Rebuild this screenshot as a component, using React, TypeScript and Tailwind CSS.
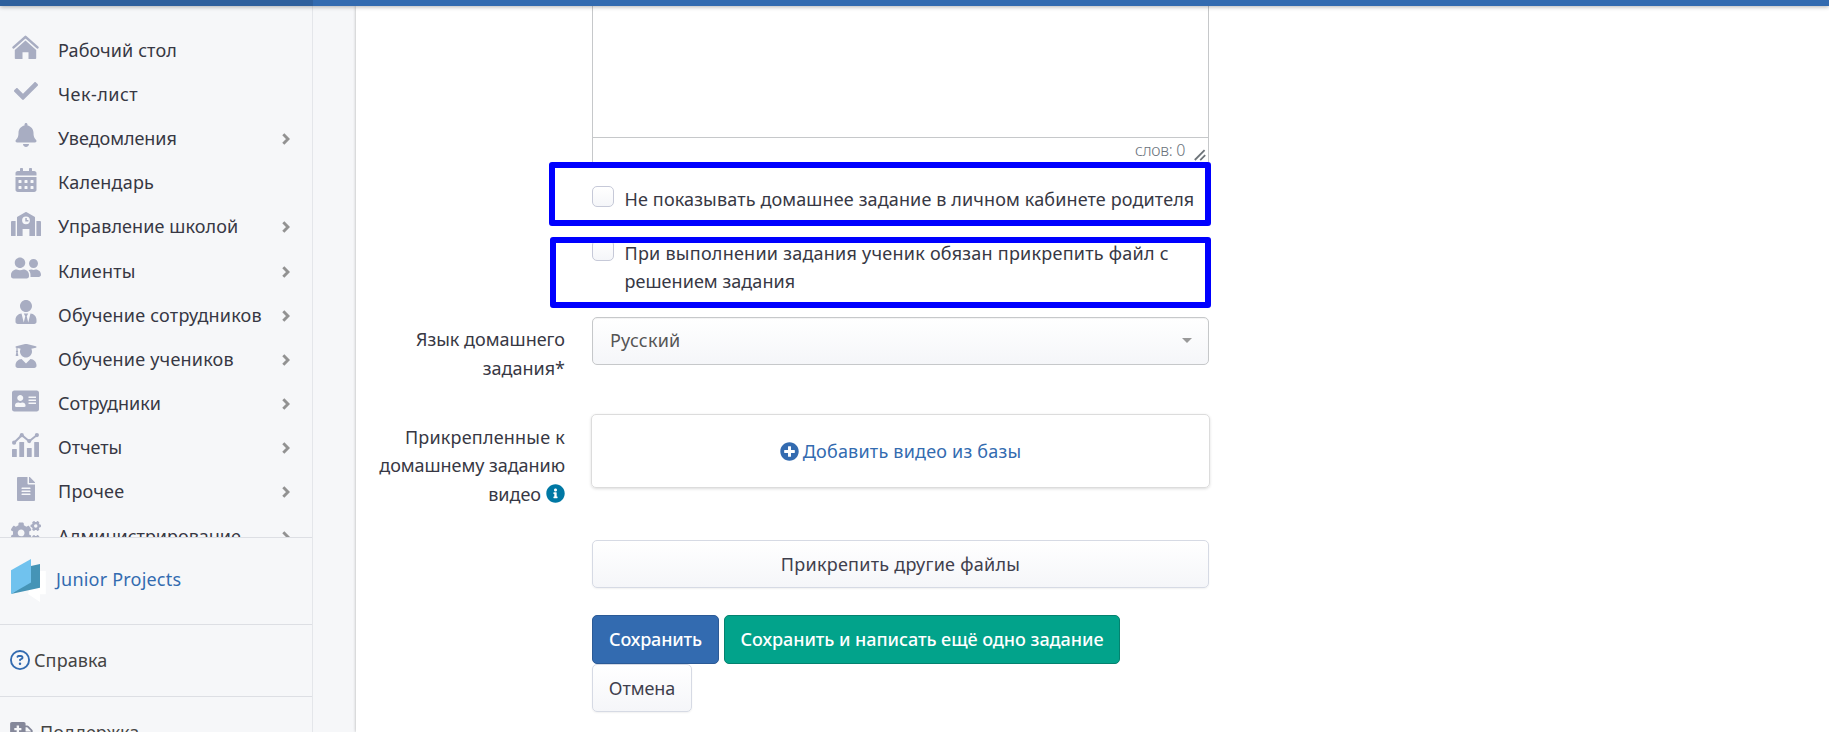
import type { ReactNode } from "react";
import {
  FaAddressCard,
  FaAmbulance,
  FaBell,
  FaCalendarAlt,
  FaCheck,
  FaCogs,
  FaFileAlt,
  FaInfoCircle,
  FaPlusCircle,
  FaUserFriends,
  FaUserGraduate,
  FaUserTie,
} from "react-icons/fa";
import { FaRegCircleQuestion } from "react-icons/fa6";

function HouseIcon() {
  return (
    <svg width="27" height="24" viewBox="0 0 27 24" fill="currentColor">
      <path
        d="M1.6 12.4 13.5 1.9 25.4 12.4"
        fill="none"
        stroke="currentColor"
        strokeWidth="2.6"
        strokeLinecap="round"
        strokeLinejoin="round"
      />
      <path d="M13.5 5.6 24.2 15V23.2a.8.8 0 0 1-.8.8H16.5V17.3H10.5V24H3.6a.8.8 0 0 1-.8-.8V15Z" />
    </svg>
  );
}

function SchoolIcon() {
  return (
    <svg width="30" height="24" viewBox="0 0 30 24" fill="currentColor">
      <path d="M0 10a1 1 0 0 1 1-1h3.6v15H.6a.6.6 0 0 1-.6-.6ZM29 9a1 1 0 0 1 1 1v13.4a.6.6 0 0 1-.6.6h-4V9Z" />
      <path
        fillRule="evenodd"
        d="M6 5.6a1 1 0 0 1 .45-.85L14.3.2a1.3 1.3 0 0 1 1.4 0l7.85 4.55a1 1 0 0 1 .45.85V24h-5.6v-7h-6.8v7H6ZM15 4.4a3.9 3.9 0 1 0 0 7.8 3.9 3.9 0 0 0 0-7.8Zm-.7 1.6h1.5v2.1h1.6v1.4h-3.1Z"
      />
    </svg>
  );
}

function ReportsIcon() {
  return (
    <svg width="27" height="24" viewBox="0 0 27 24" fill="currentColor">
      <rect x="0" y="16" width="4.8" height="8" rx="0.5" />
      <rect x="7.3" y="9" width="4.8" height="15" rx="0.5" />
      <rect x="14.9" y="15" width="4.8" height="9" rx="0.5" />
      <rect x="22.2" y="9" width="4.8" height="15" rx="0.5" />
      <path d="M2 9.8 9.8 2.2 17.2 8.2 25 2" fill="none" stroke="currentColor" strokeWidth="2" />
      <circle cx="2.1" cy="9.7" r="2.1" />
      <circle cx="9.8" cy="2.2" r="2.1" />
      <circle cx="17.2" cy="8.1" r="2.1" />
      <circle cx="24.9" cy="2.1" r="2.1" />
    </svg>
  );
}

function Chevron() {
  return (
    <svg width="8" height="12" viewBox="0 0 8 12" className="mt-[3px] mr-[22px] ml-auto shrink-0">
      <path d="M1.300 1.200 6 6 1.300 10.800" fill="none" stroke="#929292" strokeWidth="2.900" />
    </svg>
  );
}

function BrandLogo() {
  return (
    <svg width="35" height="44" viewBox="0 0 35 44">
      <path d="M22 12h12.8v23.200h-5.800V43L17 35Z" fill="#fff" />
      <path d="M20 7 29 5v23.700L0 35l20-14Z" fill="#4594b6" />
      <path d="M0 11.300 20 0v23.500L0 35Z" fill="#70c2ee" />
    </svg>
  );
}

type MenuItem = { label: string; icon: ReactNode; tracking: string; nested?: boolean };

const menu: MenuItem[] = [
  { label: "Рабочий стол", icon: <HouseIcon />, tracking: "tracking-[0.1px]" },
  { label: "Чек-лист", icon: <FaCheck size={24} />, tracking: "tracking-[0.5px]" },
  { label: "Уведомления", icon: <FaBell size={24} />, tracking: "tracking-[-0.05px]", nested: true },
  { label: "Календарь", icon: <FaCalendarAlt size={24} />, tracking: "tracking-[0.2px]" },
  { label: "Управление школой", icon: <SchoolIcon />, tracking: "tracking-[0.1px]", nested: true },
  { label: "Клиенты", icon: <FaUserFriends className="h-6 w-[30px]" />, tracking: "tracking-[0.25px]", nested: true },
  { label: "Обучение сотрудников", icon: <FaUserTie size={24} />, tracking: "tracking-[0.2px]", nested: true },
  { label: "Обучение учеников", icon: <FaUserGraduate size={24} />, tracking: "tracking-[0.2px]", nested: true },
  { label: "Сотрудники", icon: <FaAddressCard className="h-6 w-[27px]" />, tracking: "tracking-normal", nested: true },
  { label: "Отчеты", icon: <ReportsIcon />, tracking: "tracking-[-0.05px]", nested: true },
  { label: "Прочее", icon: <FaFileAlt size={24} />, tracking: "tracking-[0.2px]", nested: true },
  { label: "Администрирование", icon: <FaCogs className="h-6 w-[30px]" />, tracking: "tracking-normal", nested: true },
];

function Sidebar() {
  return (
    <aside className="flex w-[313px] shrink-0 flex-col overflow-hidden border-r border-[#e4e6ea]">
      <nav className="h-[531px] shrink-0 overflow-hidden pt-[21px]">
        {menu.map((item) => (
          <a key={item.label} className="flex h-[44.2px] items-center text-[#373844]">
            <span className="mb-1 flex w-[51px] shrink-0 justify-center text-[#a8adc2]">{item.icon}</span>
            <span className={`mt-0.5 ml-[7px] whitespace-nowrap ${item.tracking}`}>{item.label}</span>
            {item.nested && <Chevron />}
          </a>
        ))}
      </nav>
      <a className="flex h-[87px] shrink-0 border-t border-[#dddfe4] pt-[21px] pl-[11px] text-[#336bb0]">
        <BrandLogo />
        <span className="ml-[10px] pt-[6px] leading-[29px] tracking-[0.2px]">Junior Projects</span>
      </a>
      <a className="flex h-[72px] shrink-0 border-t border-[#dddfe4] pt-[21px] pl-[10px] leading-[29px] text-[#444]">
        <FaRegCircleQuestion size={20} className="mt-1 mr-1 text-[#336bb0]" />
        <span className="tracking-[0.1px]">Справка</span>
      </a>
      <a className="flex h-[72px] shrink-0 border-t border-[#dddfe4] pt-[21px] pl-[10px] leading-[29px] text-[#444]">
        <FaAmbulance className="mt-1 mr-1.5 h-[19px] w-[24px] text-[#85889a]" />
        <span>Поддержка</span>
      </a>
    </aside>
  );
}

function CheckBox() {
  return (
    <span className="h-[21px] w-[22px] shrink-0 rounded-[5px] border border-[#c6c9d8] bg-linear-to-b from-white to-[#f5f6f9]" />
  );
}

function ResizeHandle() {
  return (
    <svg width="12" height="12" viewBox="0 0 12 12" className="mt-[11px] mr-0.5 ml-[9px]">
      <path d="M.8 11 10.600 1.200M6.200 11.200 11.200 6.200" stroke="#6d7479" strokeWidth="1.8" />
    </svg>
  );
}

const lightButton =
  "h-12 rounded-[5px] border border-[#d6dae4] bg-linear-to-b from-white to-[#f5f6f9] text-[#3f404d] shadow-[0_1px_2px_rgba(0,0,0,0.06)]";

export default function App() {
  return (
    <div className="flex h-[732px] w-full flex-col overflow-hidden bg-[#f6f7f9] font-['Noto_Sans',sans-serif] text-[18px] text-[#373844]">
      <header className="z-10 flex h-1.5 shrink-0 bg-[#336bb0] shadow-[0_1px_4px_rgba(0,0,0,0.3)]">
        <div className="w-[313px] bg-[#2f609d]" />
      </header>
      <div className="flex min-h-0 flex-1">
        <Sidebar />
        <main className="ml-[43px] flex flex-1 bg-white shadow-[0_0_3px_rgba(0,0,0,0.3)]">
          <form className="w-[855px]">
            <div className="ml-[236px] h-[156px] w-[617px] border-x border-[#c6c8ca]">
              <div className="h-[131px]" />
              <div className="flex h-[25px] justify-end border-t border-[#c6c8ca] text-base leading-[25px] font-light text-[#6a727b]">
                <span className="tracking-[-0.3px]">слов: 0</span>
                <ResizeHandle />
              </div>
            </div>

            <div className="ml-[193px] flex h-16 w-[662px] rounded-[3px] border-6 border-[#0000ff] pt-[18px] pl-[37px]">
              <CheckBox />
              <span className="-mt-px ml-[10.500px] leading-[28px] tracking-[0.13px] whitespace-nowrap">
                Не показывать домашнее задание в личном кабинете родителя
              </span>
            </div>

            <div className="mt-[11px] ml-[194px] flex h-[71px] w-[661px] overflow-hidden rounded-[3px] border-6 border-[#0000ff] pl-9">
              <span className="-mt-[3px] flex shrink-0">
                <CheckBox />
              </span>
              <span className="-mt-1 ml-[10.500px] leading-[28px] whitespace-nowrap">
                <span className="tracking-[0.24px]">При выполнении задания ученик обязан прикрепить файл с</span>
                <br />
                <span className="tracking-[0.05px]">решением задания</span>
              </span>
            </div>

            <div className="mt-[9px] flex">
              <label className="mt-2 w-[209px] text-right leading-[29px]">
                Язык домашнего
                <br />
                задания*
              </label>
              <div className="ml-[27px] flex h-12 w-[617px] items-center justify-between rounded-[5px] border border-[#c6c8ca] bg-linear-to-b from-white to-[#f5f6f9] pr-4 pb-px pl-[17px] text-[#555] shadow-[inset_0_1px_1px_rgba(0,0,0,0.05)]">
                <span className="tracking-[0.2px]">Русский</span>
                <svg width="10" height="5" viewBox="0 0 10 5">
                  <path d="M0 0h10L5 5Z" fill="#999" />
                </svg>
              </div>
            </div>

            <div className="mt-[31px] flex">
              <label className="mt-[8.500px] w-[209px] text-right leading-[28.500px] whitespace-nowrap">
                <span className="tracking-[0.2px]">Прикрепленные к</span>
                <br />
                <span className="tracking-[-0.05px]">домашнему заданию</span>
                <span className="flex items-center justify-end gap-[5px]">
                  видео
                  <FaInfoCircle size={19} className="text-[#0078a4]" />
                </span>
              </label>
              <div className="ml-[26px] flex h-[74px] w-[619px] items-center justify-center gap-1 rounded-[5px] border border-[#dcdcdc] text-[#336bb0] shadow-[0_1px_3px_rgba(0,0,0,0.14)]">
                <FaPlusCircle size={19} />
                <span className="tracking-[0.2px]">Добавить видео из базы</span>
              </div>
            </div>

            <div className="mt-8 ml-[236px] w-[617px]">
              <button type="button" className={`w-full tracking-[0.25px] ${lightButton}`}>
                Прикрепить другие файлы
              </button>
              <div className="mt-[27px] flex gap-[5px] font-medium text-white">
                <button type="button" className="h-[49px] w-[127px] rounded-[5px] border border-[#2b5a96] bg-[#336bb0] tracking-[-0.15px]">
                  Сохранить
                </button>
                <button type="button" className="h-[49px] w-[396px] rounded-[5px] border border-[#04826f] bg-[#02a38b] tracking-[-0.05px] whitespace-nowrap">
                  Сохранить и написать ещё одно задание
                </button>
              </div>
              <button type="button" className={`w-[100px] tracking-[-0.1px] ${lightButton}`}>
                Отмена
              </button>
            </div>
          </form>
        </main>
      </div>
    </div>
  );
}
